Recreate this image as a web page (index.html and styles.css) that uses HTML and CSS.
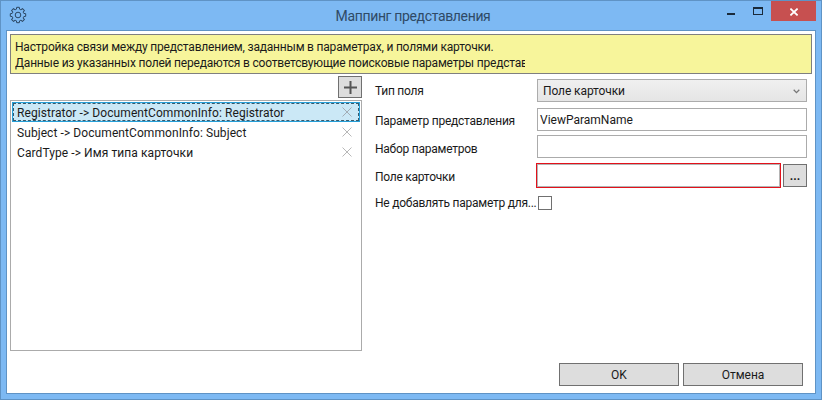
FILE: index.html
```html
<!DOCTYPE html>
<html lang="ru">
<head>
<meta charset="utf-8">
<title>Маппинг представления</title>
<link rel="stylesheet" href="styles.css">
</head>
<body>
<div class="window">
  <header class="titlebar">
    <div class="title-left">
      <svg class="gear" width="18" height="18" viewBox="-9 -9 18 18" fill="none" stroke="#2b4662" stroke-width="1">
        <defs><polyline id="tooth" points="-2.3,-5.5 -1.6,-5.8 -1.3,-7.7 1.3,-7.7 1.6,-5.8 2.3,-5.5"/></defs>
        <use href="#tooth"/><use href="#tooth" transform="rotate(45)"/><use href="#tooth" transform="rotate(90)"/><use href="#tooth" transform="rotate(135)"/><use href="#tooth" transform="rotate(180)"/><use href="#tooth" transform="rotate(225)"/><use href="#tooth" transform="rotate(270)"/><use href="#tooth" transform="rotate(315)"/>
        <circle r="2.8"/>
      </svg>
    </div>
    <div class="title">Маппинг представления</div>
    <div class="controls">
      <span class="ctl ctl-min"><i class="min"></i></span>
      <span class="ctl"><i class="max"></i></span>
      <span class="close">
        <svg width="8" height="8" viewBox="0 0 8 8" fill="none" stroke="#fff" stroke-width="1.8"><path d="M0.4 0.6L7.6 7.4M7.6 0.6L0.4 7.4"/></svg>
      </span>
    </div>
  </header>
  <main class="client">
    <div class="notice">
      <div class="notice-line">Настройка связи между представлением, заданным в параметрах, и полями карточки.</div>
      <div class="notice-line">Данные из указанных полей передаются в соответсвующие поисковые параметры представ</div>
    </div>
    <div class="content">
      <section class="left">
        <div class="add-row">
          <button class="add" type="button">
            <svg width="13" height="13" viewBox="0 0 13 13" fill="#555"><path d="M5.5 0h2v5.5H13v2H7.5V13h-2V7.5H0v-2h5.5z"/></svg>
          </button>
        </div>
        <div class="list">
          <div class="item selected"><span>Registrator -&gt; DocumentCommonInfo: Registrator</span><svg class="x" width="10" height="10" viewBox="0 0 10 10" fill="none" stroke="#a3adb5"><path d="M0.5 0.5L9.5 9.5M9.5 0.5L0.5 9.5"/></svg></div>
          <div class="item"><span>Subject -&gt; DocumentCommonInfo: Subject</span><svg class="x" width="10" height="10" viewBox="0 0 10 10" fill="none" stroke="#b8b8b8"><path d="M0.5 0.5L9.5 9.5M9.5 0.5L0.5 9.5"/></svg></div>
          <div class="item"><span>CardType -&gt; Имя типа карточки</span><svg class="x" width="10" height="10" viewBox="0 0 10 10" fill="none" stroke="#b8b8b8"><path d="M0.5 0.5L9.5 9.5M9.5 0.5L0.5 9.5"/></svg></div>
        </div>
      </section>
      <section class="form">
        <label class="lbl">Тип поля</label>
        <div class="combo"><span>Поле карточки</span><svg width="7" height="5" viewBox="0 0 7 5" fill="none" stroke="#777" stroke-width="1.3"><path d="M0.7 0.8L3.5 3.6L6.3 0.8"/></svg></div>
        <label class="lbl lbl-low">Параметр представления</label>
        <div class="input">ViewParamName</div>
        <label class="lbl lbl-lower">Набор параметров</label>
        <div class="input"></div>
        <label class="lbl lbl-lower">Поле карточки</label>
        <div class="picker">
          <div class="input invalid"></div>
          <button class="dots" type="button">...</button>
        </div>
        <label class="lbl lbl-last">Не добавлять параметр для...</label>
        <div class="check"></div>
      </section>
    </div>
    <footer class="buttons">
      <button class="btn" type="button">OK</button>
      <button class="btn" type="button">Отмена</button>
    </footer>
  </main>
</div>
</body>
</html>
```

FILE: styles.css
```css
* { box-sizing: border-box; }
html, body { margin: 0; padding: 0; }
body { width: 822px; height: 400px; overflow: hidden; font-family: Roboto, "Noto Sans", sans-serif; font-size: 12px; color: #1a1a1a; }
.window { width: 822px; height: 400px; background: #7db9f3; border: 1px solid #5f93c5; padding: 0 5px 5px 5px; display: flex; flex-direction: column; }
.titlebar { height: 29px; display: grid; grid-template-columns: 1fr auto 1fr; flex: none; }
.title-left { padding: 5px 0 0 3px; }
.gear { display: block; }
.title { font-size: 14px; letter-spacing: -0.35px; color: #2f4a66; padding: 5px 0 0 4px; line-height: 20px; }
.controls { display: flex; justify-content: flex-end; align-items: flex-start; }
.ctl { width: 26px; height: 20px; display: flex; align-items: center; justify-content: center; }
.ctl-min { padding-right: 2px; }
.min { display: block; width: 8px; height: 2px; background: #1a2a3a; margin-top: 6px; }
.max { display: block; width: 10px; height: 8px; border: 1px solid #1a2a3a; border-top-width: 2px; }
.close { width: 45px; height: 20px; background: #c75050; display: flex; align-items: center; justify-content: center; }
.close svg { display: block; margin-top: 1px; }
.client { flex: 1; background: #fff; border: 1px solid #5f93c5; padding: 3px 3px 7px; display: flex; flex-direction: column; }
.notice { height: 40px; background: #f7f59b; border: 1px solid #7f7f7f; padding: 4px 4px 0; width: 802px; }
.notice-line { width: 510px; height: 16px; line-height: 16px; white-space: nowrap; overflow: hidden; letter-spacing: -0.2px; }
.content { flex: 1; display: flex; }
.left { width: 352px; display: flex; flex-direction: column; }
.add-row { display: flex; justify-content: flex-end; padding-top: 2px; height: 26px; }
.add { width: 24px; height: 22px; padding: 0; background: #dddddd; border: 1px solid #707070; display: flex; align-items: center; justify-content: center; }
.list { height: 251px; border: 1px solid #ababab; padding: 1px; }
.item { height: 20px; padding: 0 8px 0 5px; display: flex; align-items: center; justify-content: space-between; }
.item.selected { background: #cbe8f6; border: 1px solid #26a0da; outline: 1px dashed #3a5a6a; outline-offset: -2px; padding: 0 7px 0 4px; }
.item span { line-height: 16px; padding-top: 1px; letter-spacing: 0.08px; }
.form { margin: 5px 0 0 13px; display: grid; grid-template-columns: 162px 270px; grid-template-rows: 29px 27px 28px 33px 14px; align-content: start; }
.lbl { height: 23px; display: flex; align-items: center; white-space: nowrap; letter-spacing: -0.25px; }
.lbl-low { height: 25px; }
.lbl-lower { height: 27px; }
.lbl-last { height: 14px; }
.combo { height: 23px; border: 1px solid #acacac; background: linear-gradient(#f0f0f0, #e5e5e5); display: flex; align-items: center; justify-content: space-between; padding: 1px 6px 0 5px; letter-spacing: -0.1px; }
.input { height: 23px; border: 1px solid #ababab; background: #fff; padding: 0 2px; line-height: 23px; }
.picker { height: 25px; display: flex; justify-content: space-between; align-items: center; margin-left: -1px; }
.input.invalid { width: 245px; height: 25px; border: 1px solid #e3111b; box-shadow: inset 0 0 0 1px #b4b4b4; }
.dots { width: 24px; height: 23px; padding: 0; background: #dddddd; border: 1px solid #707070; font: inherit; font-weight: 700; color: #1a1a1a; line-height: 20px; }
.check { width: 14px; height: 14px; border: 1px solid #707070; background: #fff; margin-left: 1px; }
.buttons { display: flex; justify-content: flex-end; gap: 4px; padding-right: 9px; }
.btn { width: 120px; height: 23px; padding: 0; background: #dddddd; border: 1px solid #707070; font: inherit; color: #1a1a1a; }
```
